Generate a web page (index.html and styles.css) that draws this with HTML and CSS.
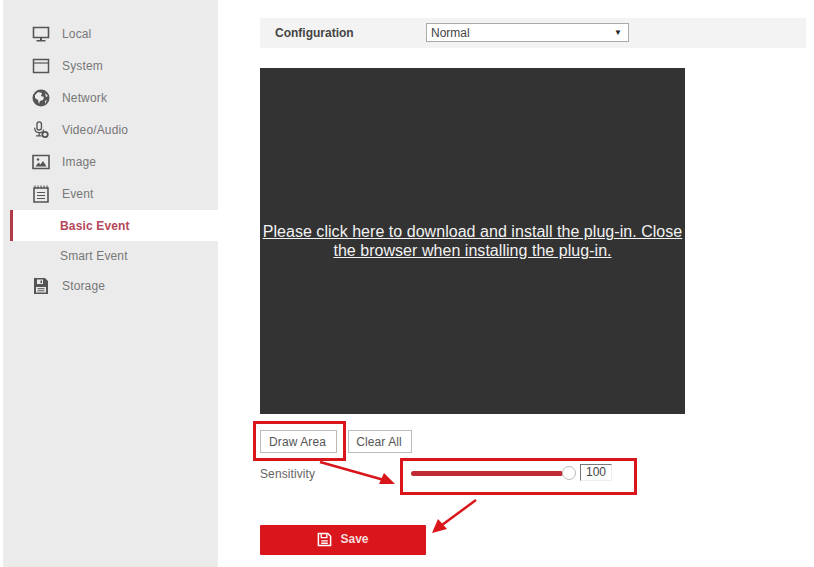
FILE: index.html
```html
<!DOCTYPE html>
<html lang="en">
<head>
    <meta charset="UTF-8">
    <title>Motion Detection</title>
    <link rel="stylesheet" href="styles.css">
</head>
<body>
<div class="page">
    <nav class="sidebar">
        <div class="nav-item">
            <svg class="nav-icon" viewBox="0 0 18 18"><path d="M1.5 2.5h15v10h-15z" fill="none" stroke="#555" stroke-width="1.6"/><path d="M8 13h2v2H8zM4.5 15h9v1.5h-9z" fill="#555"/></svg>
            <span>Local</span>
        </div>
        <div class="nav-item">
            <svg class="nav-icon" viewBox="0 0 18 18"><path d="M1.5 2.5h15v13h-15z" fill="none" stroke="#555" stroke-width="1.5"/><path d="M1.5 6h15" stroke="#555" stroke-width="1.2"/></svg>
            <span>System</span>
        </div>
        <div class="nav-item">
            <svg class="nav-icon" viewBox="0 0 18 18"><circle cx="9" cy="9" r="8.5" fill="#555"/><path d="M3 6l3-3 4 1-1 3 3 1-1 3-3 1-1 3-1-4-3-2zM13 4l3 3-2 1zM13 12l2-1-2 4z" fill="#ebebeb"/></svg>
            <span>Network</span>
        </div>
        <div class="nav-item">
            <svg class="nav-icon" viewBox="0 0 18 20"><rect x="4.5" y="1" width="5" height="9" rx="2.5" fill="none" stroke="#555" stroke-width="1.5"/><path d="M2 7.5c0 7 9 7 10 2M7 13v3M3.5 16.5h6" fill="none" stroke="#555" stroke-width="1.4"/><circle cx="13.5" cy="15" r="3" fill="none" stroke="#555" stroke-width="2"/></svg>
            <span>Video/Audio</span>
        </div>
        <div class="nav-item">
            <svg class="nav-icon" viewBox="0 0 18 18"><path d="M1 2.5h16v13H1z" fill="none" stroke="#555" stroke-width="1.6"/><path d="M3.5 13.5l3-4 2 2 2.5-3.5 3.5 5.5z" fill="#555"/><circle cx="6" cy="6.5" r="1.2" fill="#555"/></svg>
            <span>Image</span>
        </div>
        <div class="nav-item">
            <svg class="nav-icon" viewBox="0 0 18 18"><path d="M2 3h14v14H2z" fill="none" stroke="#555" stroke-width="1.6"/><path d="M3 .5v3M6 .5v3M9 .5v3M12 .5v3M15 .5v3" stroke="#555" stroke-width="1.1"/><path d="M5 7.5h8M5 10.5h8M5 13.5h8" stroke="#555" stroke-width="1.2"/></svg>
            <span>Event</span>
        </div>
        <div class="nav-sub active">Basic Event</div>
        <div class="nav-sub">Smart Event</div>
        <div class="nav-item">
            <svg class="nav-icon" viewBox="0 0 18 18"><path d="M2 1h11l3 3v13H2z" fill="#555"/><path d="M5 2.500h6v4.500H5z" fill="#ebebeb"/><path d="M8.500 3.500h1.500v2.500H8.500z" fill="#555"/><path d="M4 10h10v5.500H4z" fill="#ebebeb"/><path d="M5.500 11.700h7M5.500 13.800h7" stroke="#555" stroke-width="1"/></svg>
            <span>Storage</span>
        </div>
    </nav>

    <main class="content">
        <div class="config-bar">
            <span class="config-label">Configuration</span>
            <div class="select-box">
                <span>Normal</span>
                <span class="select-arrow">▼</span>
            </div>
        </div>

        <div class="plugin-box">
            <a class="plugin-link" href="#">Please click here to download and install the plug-in. Close the browser when installing the plug-in.</a>
        </div>

        <div class="btn-row">
            <button class="btn btn-draw" type="button">Draw Area</button>
            <button class="btn" type="button">Clear All</button>
        </div>

        <div class="sensitivity-row">
            <span class="sensitivity-label">Sensitivity</span>
            <div class="slider">
                <div class="slider-track"></div>
                <div class="slider-thumb"></div>
            </div>
            <div class="slider-value">100</div>
        </div>

        <button class="btn-save" type="button">
            <svg class="save-icon" viewBox="0 0 16 16"><path d="M1.500 1.500h10l3 3v10h-13z" fill="none" stroke="#fff" stroke-width="1.600"/><path d="M4.500 2v4h6V2" fill="none" stroke="#fff" stroke-width="1.400"/><path d="M4.500 9.500h7M4.500 12h7" stroke="#fff" stroke-width="1.400"/></svg>
            <span>Save</span>
        </button>
    </main>

    <!-- red annotations drawn over the screenshot -->
    <div class="mark mark-draw"></div>
    <div class="mark mark-slider"></div>
    <svg class="arrows" viewBox="0 0 814 567">
        <path d="M320 462L384 480" stroke="#d8161c" stroke-width="2.500"/>
        <path d="M395 484L379 484L384 473z" fill="#d8161c"/>
        <path d="M476 500L442 525" stroke="#d8161c" stroke-width="2.500"/>
        <path d="M432 533L438 519L447 529z" fill="#d8161c"/>
    </svg>
</div>
</body>
</html>
```

FILE: styles.css
```css
* {
  box-sizing: border-box;
}

body {
  margin: 0;
  font-family: "Liberation Sans", Arial, sans-serif;
  background-color: #fff;
}

.page {
  position: relative;
  display: flex;
  width: 814px;
  height: 567px;
  padding-left: 3px;
  overflow: hidden;
}

.sidebar {
  width: 215px;
  height: 567px;
  padding-top: 18px;
  background-color: #ebebeb;
  flex-shrink: 0;
}

.nav-item {
  display: flex;
  align-items: center;
  height: 32px;
  padding-left: 29px;
  font-size: 12px;
  letter-spacing: 0.15px;
  color: #777;
}

.nav-icon {
  width: 18px;
  height: 18px;
  margin-right: 12px;
  flex-shrink: 0;
}

.nav-sub {
  display: flex;
  align-items: center;
  height: 29px;
  margin-left: 7px;
  padding-left: 50px;
  font-size: 12px;
  letter-spacing: 0.15px;
  color: #777;
}

.nav-sub.active {
  height: 31px;
  background-color: #fff;
  border-left: 3px solid #b03a48;
  padding-left: 47px;
  font-weight: bold;
  color: #b5485a;
}

.content {
  flex: 1;
  padding: 18px 8px 0 42px;
}

.config-bar {
  display: flex;
  align-items: center;
  height: 30px;
  padding-left: 15px;
  background-color: #f3f3f3;
}

.config-label {
  width: 151px;
  font-size: 12px;
  font-weight: bold;
  color: #444;
}

.select-box {
  display: flex;
  align-items: center;
  justify-content: space-between;
  width: 203px;
  height: 19px;
  margin-bottom: 1px;
  padding: 0 6px 0 4px;
  background-color: #fff;
  border: 1px solid #aaa;
  font-size: 12px;
  color: #444;
}

.select-arrow {
  font-size: 8px;
  color: #222;
}

.plugin-box {
  display: flex;
  align-items: center;
  justify-content: center;
  width: 425px;
  height: 346px;
  margin-top: 20px;
  background-color: #333;
  text-align: center;
}

.plugin-link {
  display: block;
  font-size: 16px;
  line-height: 19px;
  letter-spacing: 0.04px;
  color: #f2f2f2;
  text-decoration: underline;
}

.btn-row {
  display: flex;
  gap: 11px;
  margin-top: 16px;
}

.btn {
  width: 64px;
  height: 23px;
  padding: 0 2px 0 0;
  background-color: #fff;
  border: 1px solid #bbb;
  font-family: inherit;
  font-size: 12px;
  letter-spacing: 0.1px;
  color: #555;
}

.btn-draw {
  width: 77px;
}

.sensitivity-row {
  display: flex;
  align-items: center;
  height: 17px;
  margin-top: 11px;
}

.sensitivity-label {
  width: 151px;
  padding-top: 2px;
  font-size: 12px;
  letter-spacing: 0.1px;
  color: #666;
}

.slider {
  position: relative;
  width: 165px;
  height: 14px;
  flex-shrink: 0;
}

.slider-track {
  width: 152px;
  height: 5px;
  margin-top: 5px;
  background-color: #bf2a35;
  border-radius: 3px;
}

.slider-thumb {
  position: absolute;
  top: 0;
  left: 151px;
  width: 14px;
  height: 14px;
  background-color: #fff;
  border: 1px solid #bbb;
  border-radius: 50%;
}

.slider-value {
  width: 32px;
  height: 17px;
  margin-left: 4px;
  border: 1px solid #777;
  border-right-color: #eee;
  border-bottom-color: #eee;
  font-size: 12px;
  line-height: 15px;
  text-align: center;
  color: #444;
}

.btn-save {
  display: flex;
  align-items: center;
  justify-content: center;
  gap: 8px;
  width: 166px;
  height: 30px;
  margin-top: 44px;
  padding: 0 0 2px;
  background-color: #d9161c;
  border: none;
  border-radius: 1px;
  font-family: inherit;
  font-size: 12px;
  font-weight: bold;
  color: #f6dcdc;
}

.save-icon {
  width: 15px;
  height: 15px;
}

.mark {
  position: absolute;
  border: 3px solid #d8161c;
}

.mark-draw {
  left: 253px;
  top: 421px;
  width: 93px;
  height: 40px;
}

.mark-slider {
  left: 400px;
  top: 458px;
  width: 237px;
  height: 37px;
}

.arrows {
  position: absolute;
  left: 0;
  top: 0;
  width: 814px;
  height: 567px;
}
```
